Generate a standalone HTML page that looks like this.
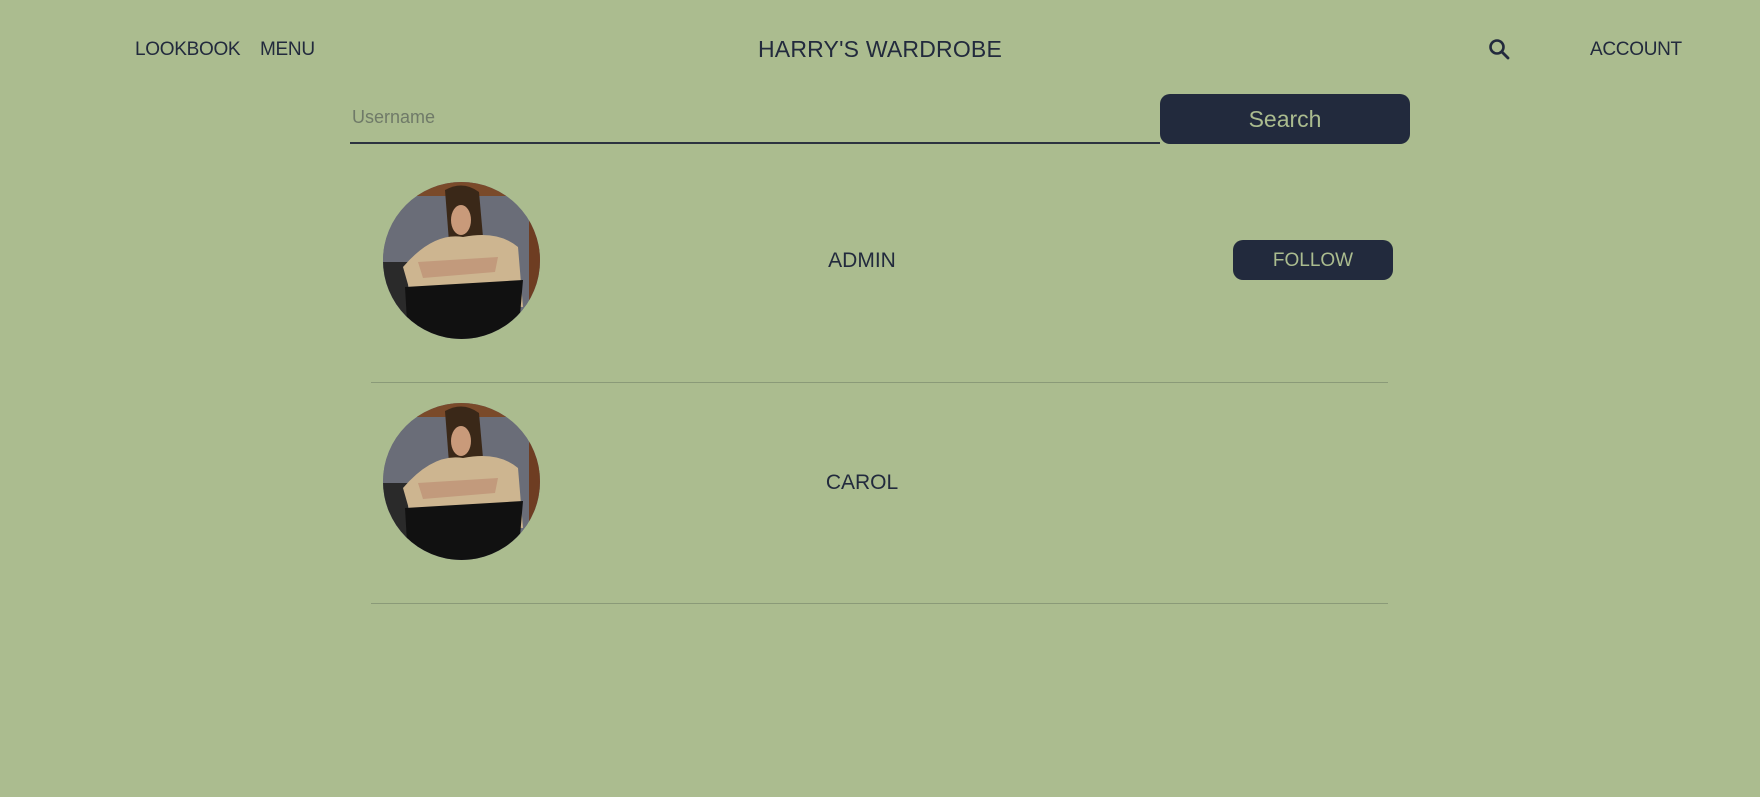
<!DOCTYPE html>
<html><head><meta charset="utf-8"><style>
*{margin:0;padding:0;box-sizing:border-box}
body{width:1760px;height:797px;background:#abbc8f;font-family:"Liberation Sans",sans-serif;color:#222a3d;position:relative;overflow:hidden}
.a{position:absolute;white-space:nowrap}
.nav{font-size:19px;top:39px;letter-spacing:-0.3px}
.title{font-size:23px;top:36px;left:758px;letter-spacing:0.2px;font-weight:500}
.line{position:absolute;height:1px;background:#8a9a78}
.av{position:absolute;width:157px;height:157px;border-radius:50%;overflow:hidden;background:#6b6e78}
.name{font-size:21px;text-align:center;width:200px;left:762px}
</style></head><body>
<div class="a nav" style="left:135px">LOOKBOOK</div>
<div class="a nav" style="left:260px">MENU</div>
<div class="a title">HARRY'S WARDROBE</div>
<svg class="a" style="left:1488px;top:38px" width="22" height="22" viewBox="0 0 22 22"><circle cx="9" cy="9" r="6.5" fill="none" stroke="#222a3d" stroke-width="2.6"/><line x1="14" y1="14" x2="20" y2="20" stroke="#222a3d" stroke-width="2.8" stroke-linecap="round"/></svg>
<div class="a nav" style="left:1590px">ACCOUNT</div>
<div class="a" style="left:352px;top:107px;font-size:18px;color:#6f7a68">Username</div>
<div style="position:absolute;left:350px;top:142px;width:810px;height:2px;background:#2c3340"></div>
<div style="position:absolute;left:1160px;top:94px;width:250px;height:50px;border-radius:10px;background:#222a3d;color:#abbc8f;font-size:23px;text-align:center;line-height:50px">Search</div>

<div class="av" style="left:383px;top:182px">
<svg width="157" height="157" viewBox="0 0 157 157"><rect width="157" height="157" fill="#6a6d78"/><rect x="0" y="0" width="157" height="14" fill="#7a4a2a"/><rect x="146" y="20" width="11" height="137" fill="#6e3d22"/><rect x="0" y="80" width="25" height="77" fill="#2a2a2a"/><path d="M62 8 Q80 -2 96 10 L100 55 L66 60 Z" fill="#3a2818"/><ellipse cx="78" cy="38" rx="10" ry="15" fill="#c99a7a"/><path d="M20 85 Q50 50 80 55 Q115 48 135 65 L140 125 L30 120 Z" fill="#cdb590"/><path d="M22 105 L140 98 L135 157 L25 157 Z" fill="#111"/><path d="M35 80 L115 75 L112 90 L40 96 Z" fill="#c29a7c"/></svg>
</div>
<div class="a name" style="top:249px">ADMIN</div>
<div style="position:absolute;left:1233px;top:240px;width:160px;height:40px;border-radius:10px;background:#222a3d;color:#abbc8f;font-size:19px;text-align:center;line-height:41px">FOLLOW</div>
<div class="line" style="left:371px;top:382px;width:1017px"></div>

<div class="av" style="left:383px;top:403px">
<svg width="157" height="157" viewBox="0 0 157 157"><rect width="157" height="157" fill="#6a6d78"/><rect x="0" y="0" width="157" height="14" fill="#7a4a2a"/><rect x="146" y="20" width="11" height="137" fill="#6e3d22"/><rect x="0" y="80" width="25" height="77" fill="#2a2a2a"/><path d="M62 8 Q80 -2 96 10 L100 55 L66 60 Z" fill="#3a2818"/><ellipse cx="78" cy="38" rx="10" ry="15" fill="#c99a7a"/><path d="M20 85 Q50 50 80 55 Q115 48 135 65 L140 125 L30 120 Z" fill="#cdb590"/><path d="M22 105 L140 98 L135 157 L25 157 Z" fill="#111"/><path d="M35 80 L115 75 L112 90 L40 96 Z" fill="#c29a7c"/></svg>
</div>
<div class="a name" style="top:471px">CAROL</div>
<div class="line" style="left:371px;top:603px;width:1017px"></div>
</body></html>
